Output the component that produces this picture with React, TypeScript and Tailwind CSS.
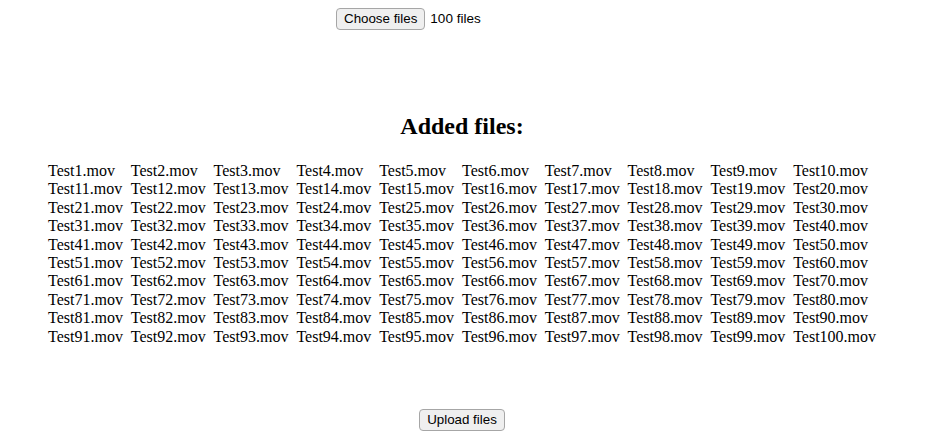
const files = Array.from({ length: 100 }, (_, i) => `Test${i + 1}.mov`)

function NativeButton({ children }: { children: React.ReactNode }) {
  return (
    <button className="h-[22px] rounded-[4px] border border-[#a6a6a6] bg-[#efefef] px-[7px] text-[13.33px] leading-none text-black font-['Liberation_Sans',Arial,sans-serif]">
      {children}
    </button>
  )
}

export default function App() {
  return (
    <div className="flex min-h-[446px] w-full flex-col items-center bg-white pr-[3px] text-black font-['Liberation_Serif','Times_New_Roman',serif]">
      <div className="mt-2 flex w-[252px] items-center gap-[5px]">
        <NativeButton>Choose files</NativeButton>
        <span className="text-[13.5px] font-['Liberation_Sans',Arial,sans-serif]">100 files</span>
      </div>

      <h2 className="mt-[83px] text-[24px] leading-[normal] font-bold">Added files:</h2>

      <div className="mt-[22px] grid w-[828px] grid-cols-10 text-[16px] leading-[18.4px]">
        {files.map((name) => (
          <div key={name} className="whitespace-nowrap">
            {name}
          </div>
        ))}
      </div>

      <div className="mt-[63px] flex">
        <NativeButton>Upload files</NativeButton>
      </div>
    </div>
  )
}
